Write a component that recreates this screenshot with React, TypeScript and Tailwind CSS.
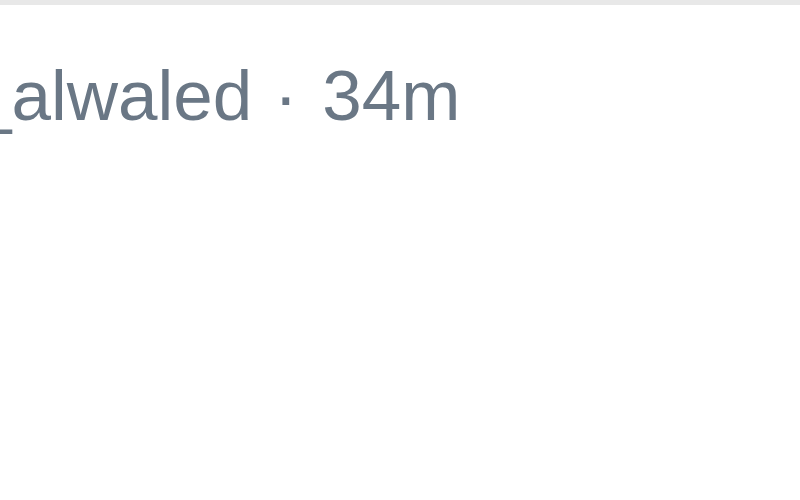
export default function App() {
  return (
    <div className="h-[500px] w-[800px] overflow-hidden bg-white">
      <div className="h-[5px] bg-[#e8e8e8]" />
      <div className="mt-[55px] -ml-[28px] whitespace-nowrap font-['Liberation_Sans',Arial,sans-serif] text-[71px] leading-none text-[#6a7785]">
        _alwaled <span className="ml-[2px] mr-[5px]">·</span> 34m
      </div>
    </div>
  );
}
